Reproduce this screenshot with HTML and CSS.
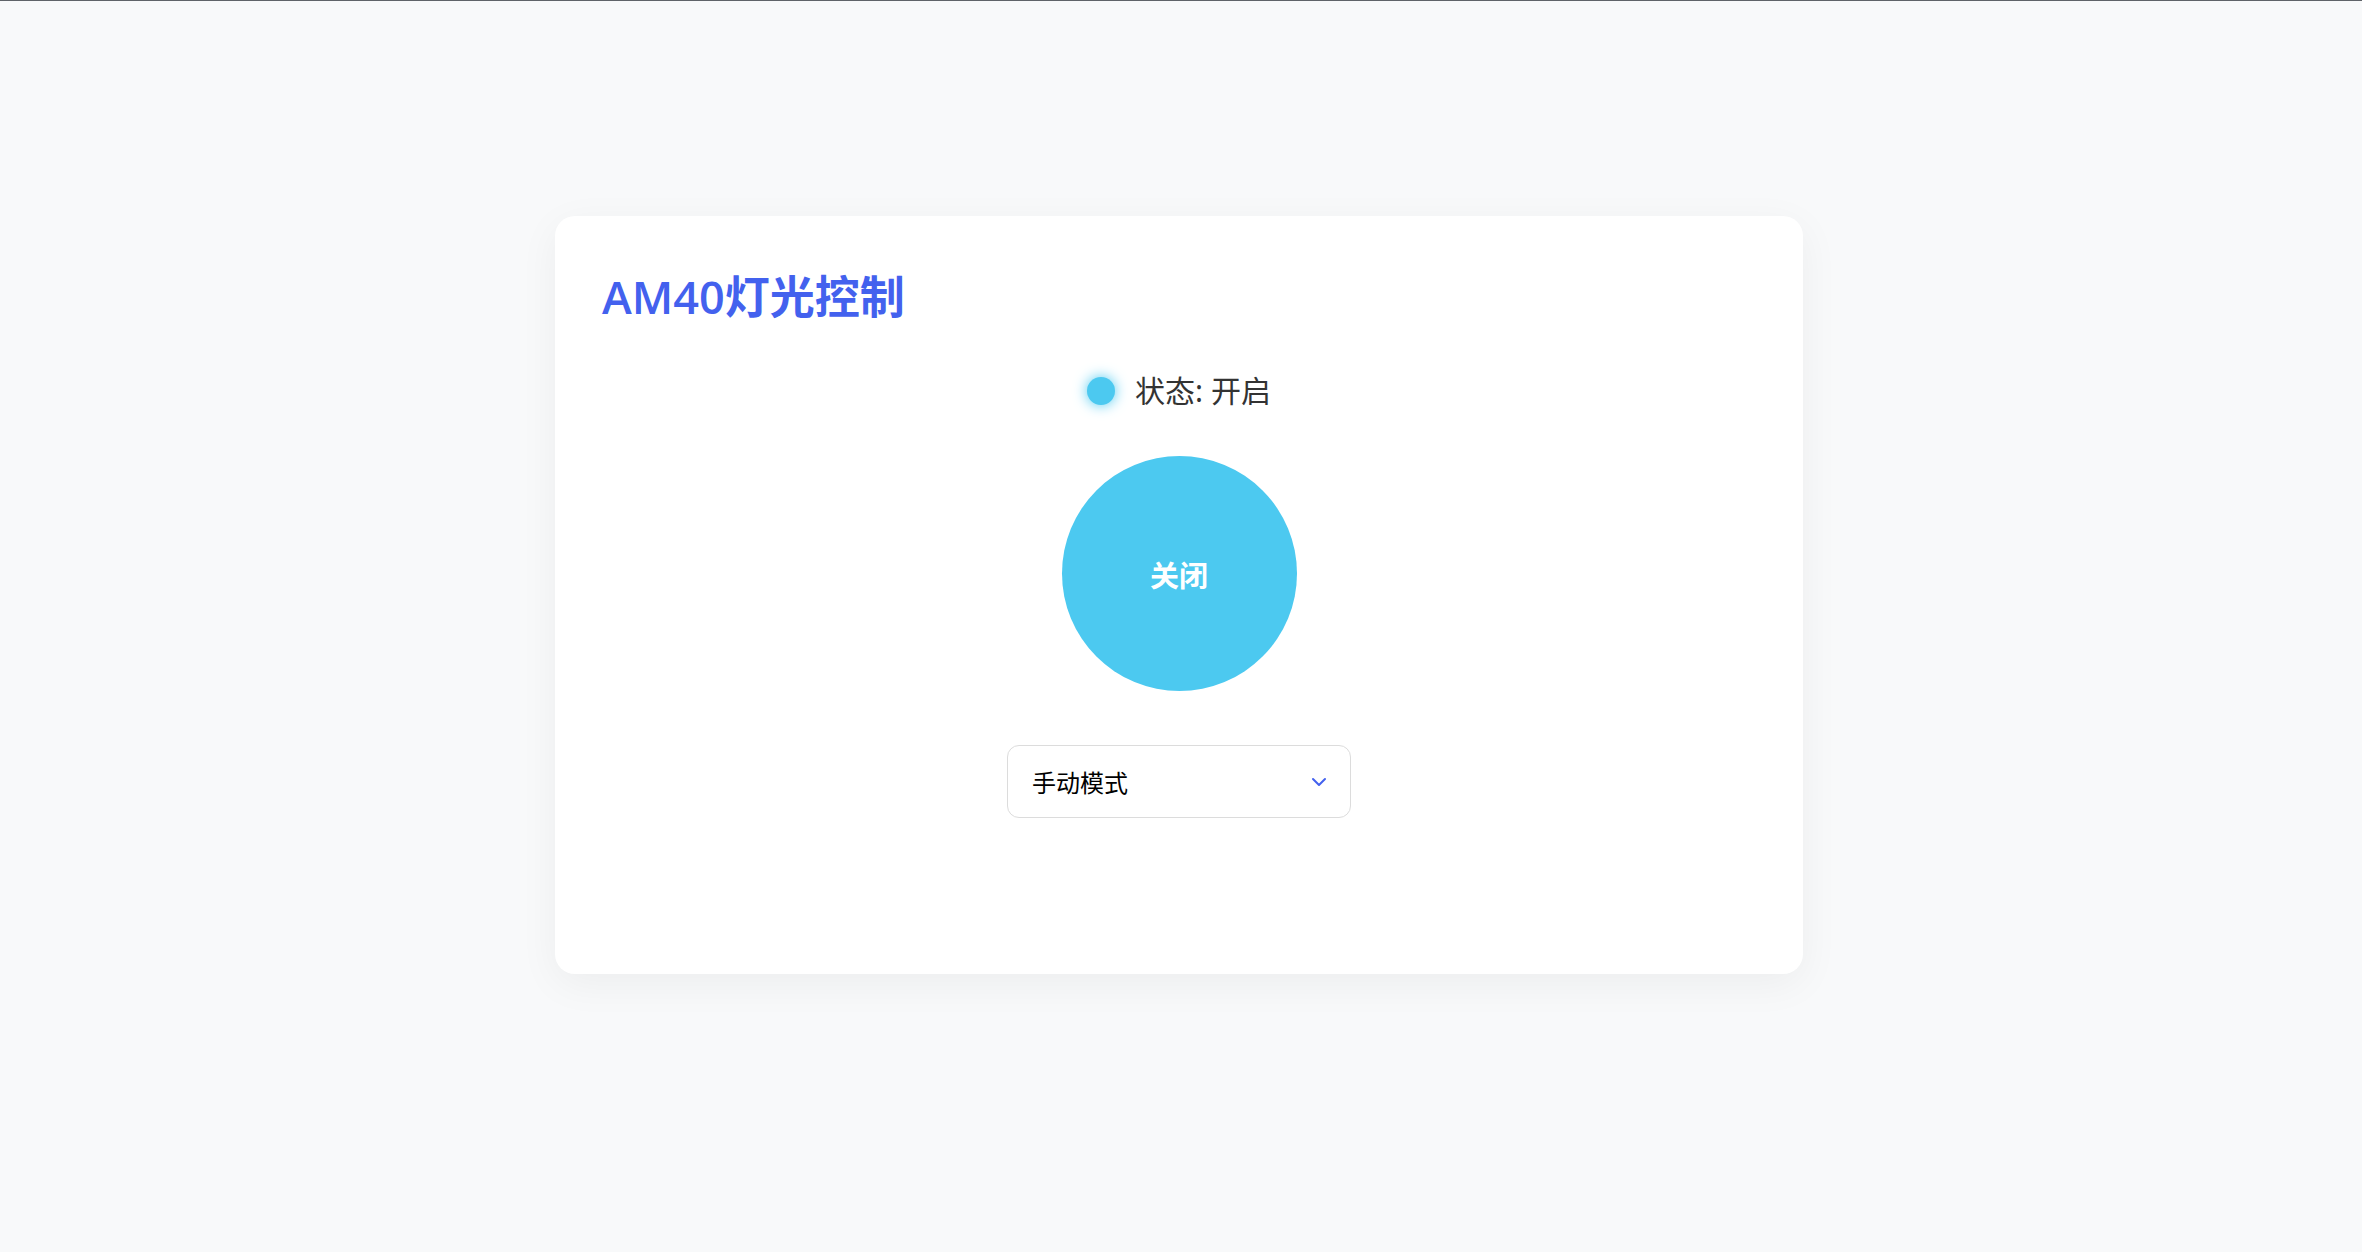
FILE: index.html
```html
<!DOCTYPE html>
<html lang="zh-CN">
<head>
<meta charset="utf-8">
<title>AM40灯光控制</title>
<link rel="stylesheet" href="styles.css">
</head>
<body>
<div class="card">
  <h1 class="title">AM40灯光控制</h1>
  <div class="status">
    <span class="dot"></span>
    <span class="status-text">状态: 开启</span>
  </div>
  <button class="power">关闭</button>
  <div class="select-wrap">
    <select class="mode">
      <option>手动模式</option>
      <option>自动模式</option>
    </select>
    <svg class="chev" width="16" height="10" viewBox="0 0 16 10"><path d="M2 2 L8 8 L14 2" fill="none" stroke="#4361ee" stroke-width="2" stroke-linecap="round" stroke-linejoin="round"/></svg>
  </div>
</div>
</body>
</html>
```
FILE: styles.css
```css
html {
  border-top: 1px solid #5f6368;
}
body {
  margin: 0;
  padding-right: 4px;
  background: #f8f9fa;
  font-family: "Noto Sans", "Noto Sans CJK SC", sans-serif;
  min-height: 1251px;
}
.card {
  width: 1248px;
  box-sizing: border-box;
  margin: 215px auto 0;
  background: #fff;
  border-radius: 20px;
  box-shadow: 0 10px 40px rgba(0, 0, 0, 0.05);
  padding: 54px 47px 156px;
  display: flex;
  flex-direction: column;
  align-items: center;
}
.title {
  align-self: stretch;
  margin: 0;
  font-size: 45px;
  line-height: 54px;
  font-weight: 600;
  color: #4361ee;
  font-family: "Open Sans", "Noto Sans CJK SC", sans-serif;
}
.status {
  margin-top: 47px;
  height: 40px;
  display: flex;
  align-items: center;
  gap: 20px;
}
.dot {
  width: 28px;
  height: 28px;
  border-radius: 50%;
  background: #4cc9f0;
  box-shadow: 0 0 14px #4cc9f0;
}
.status-text {
  font-size: 30px;
  line-height: 40px;
  color: #333;
}
.power {
  margin-top: 45px;
  width: 235px;
  height: 235px;
  border-radius: 50%;
  border: none;
  background: #4cc9f0;
  color: #fff;
  font-size: 29px;
  font-weight: 700;
  font-family: "Noto Sans CJK SC", sans-serif;
  padding: 0;
}
.select-wrap {
  margin-top: 54px;
  position: relative;
  width: 344px;
  height: 73px;
}
.mode {
  appearance: none;
  -webkit-appearance: none;
  width: 100%;
  height: 100%;
  box-sizing: border-box;
  border: 1.5px solid #dcdcdc;
  border-radius: 12px;
  background: #fff;
  padding: 0 24px;
  font-size: 24px;
  color: #000;
  font-family: "Noto Sans CJK SC", sans-serif;
}
.chev {
  position: absolute;
  right: 24px;
  top: 32px;
  pointer-events: none;
}
```
